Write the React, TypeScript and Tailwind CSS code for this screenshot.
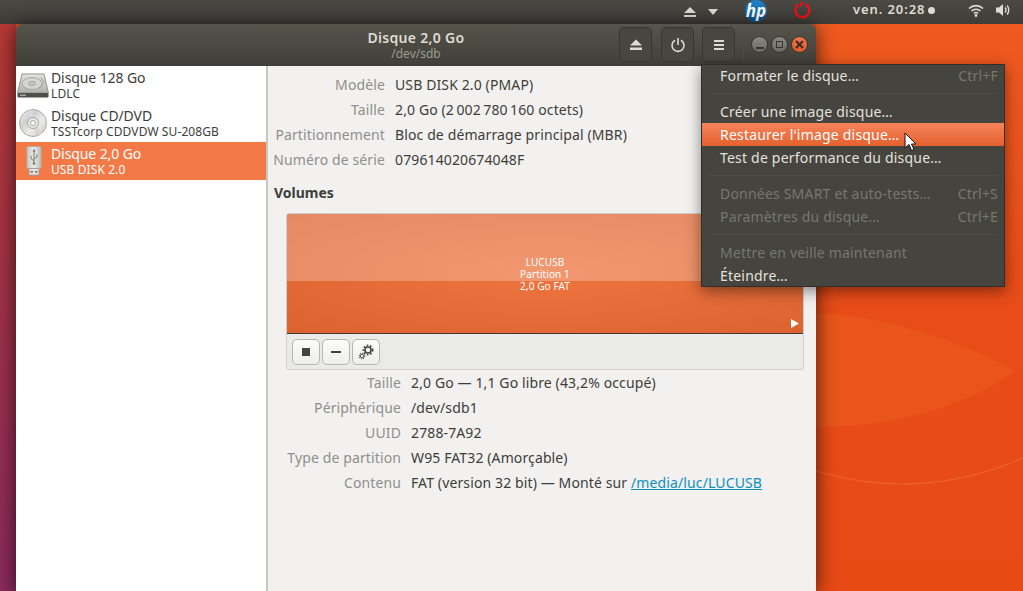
import React from "react";

const font = "font-['Noto_Sans','Open_Sans',sans-serif]";

function HddIcon() {
  return (
    <svg width="32" height="25" viewBox="0 0 32 25" className="shrink-0 -ml-[2px]">
      <defs>
        <linearGradient id="hddTop" x1="0" y1="0" x2="0" y2="1">
          <stop offset="0" stopColor="#e4e4e2" />
          <stop offset="1" stopColor="#b0b0ac" />
        </linearGradient>
      </defs>
      <path d="M5 1h22l4.5 19H.5z" fill="url(#hddTop)" stroke="#92928e" />
      <ellipse cx="15" cy="10.5" rx="10" ry="6" fill="#d4d4d1" stroke="#a8a8a4" />
      <ellipse cx="15" cy="10.5" rx="3.5" ry="2" fill="#c6c6c2" stroke="#a0a09c" />
      <path d="M24 4.5l3 5-5 6" fill="none" stroke="#9a9a96" strokeWidth="1" />
      <rect x="0.5" y="20" width="31" height="4.5" rx="1" fill="#4f4f4c" />
      <rect x="3" y="21.5" width="6" height="1.5" fill="#a2a29e" />
    </svg>
  );
}

function CdIcon() {
  return (
    <svg width="30" height="30" viewBox="0 0 30 30" className="shrink-0 -ml-[1px]">
      <defs>
        <linearGradient id="cdFace" x1="0" y1="0" x2="1" y2="1">
          <stop offset="0" stopColor="#f0f0ee" />
          <stop offset="0.35" stopColor="#cfd0d0" />
          <stop offset="0.6" stopColor="#ececea" />
          <stop offset="1" stopColor="#c8c8c6" />
        </linearGradient>
      </defs>
      <circle cx="15" cy="15" r="13.5" fill="url(#cdFace)" stroke="#aaaaa7" />
      <path d="M15 15L8 4.5A13 13 0 0 1 14 2z" fill="#dcd6de" />
      <path d="M15 15L24 25A13 13 0 0 1 18 27.5z" fill="#d9d6cf" />
      <circle cx="15" cy="15" r="5.5" fill="#e8e8e6" stroke="#a8a8a5" />
      <circle cx="15" cy="15" r="2.5" fill="#ffffff" stroke="#a8a8a5" />
    </svg>
  );
}

function UsbIcon() {
  return (
    <svg width="18" height="30" viewBox="0 0 18 30" className="shrink-0">
      <defs>
        <linearGradient id="usbBody" x1="0" y1="0" x2="1" y2="0">
          <stop offset="0" stopColor="#c9c9c5" />
          <stop offset="0.5" stopColor="#ecebe8" />
          <stop offset="1" stopColor="#bdbcb8" />
        </linearGradient>
      </defs>
      <rect x="2" y="0.5" width="14" height="22" rx="1.5" fill="url(#usbBody)" stroke="#b3b2ae" />
      <rect x="4" y="22.5" width="10" height="6.5" fill="#e6e5e2" stroke="#a19f9b" />
      <rect x="5.5" y="25" width="2.5" height="1.5" fill="#6d6c68" />
      <rect x="10" y="25" width="2.5" height="1.5" fill="#6d6c68" />
      <path d="M9 4v13M9 15l-3-2.5V10M9 13l3-2V8.5" fill="none" stroke="#77766f" strokeWidth="1" />
      <circle cx="9" cy="17.5" r="1.3" fill="#77766f" />
      <path d="M9 3l-1.5 2.5h3z" fill="#77766f" />
    </svg>
  );
}

function Drive({ icon, name, sub, active }: { icon: React.ReactNode; name: string; sub: string; active?: boolean }) {
  return (
    <div className={`h-[38px] flex items-center ${active ? "bg-[#f37a47] text-white" : "text-[#3d3d3a]"}`}>
      <div className="w-[35px] flex justify-center shrink-0">{icon}</div>
      <div className="flex flex-col">
        <span className="text-[14px] leading-[18px] tracking-[-0.1px]">{name}</span>
        <span className="text-[12px] leading-[14px] tracking-[0.1px]">{sub}</span>
      </div>
    </div>
  );
}

function Row({ label, value, w }: { label: string; value: React.ReactNode; w: string }) {
  return (
    <div className="h-[25px] flex items-center text-[14px] tracking-[0.12px]">
      <span className={`${w} text-right text-[#8f8f8b] shrink-0 whitespace-nowrap`}>{label}</span>
      <span className="ml-[10px] text-[#3d3d3a] whitespace-nowrap">{value}</span>
    </div>
  );
}

function HeaderButton({ children }: { children: React.ReactNode }) {
  return (
    <div className="w-[33px] h-[35px] rounded-[5px] border border-[#37362f] bg-[#48473f] flex items-center justify-center">
      {children}
    </div>
  );
}

function ToolButton({ children }: { children: React.ReactNode }) {
  return (
    <div className="w-[28px] h-[26px] rounded-[5px] border border-[#b5b5b1] bg-gradient-to-b from-[#fbfbfa] to-[#efefed] flex items-center justify-center">
      {children}
    </div>
  );
}

function MenuItem({ label, accel, dim, hot }: { label: string; accel?: string; dim?: boolean; hot?: boolean }) {
  return (
    <div
      className={`h-[23px] pl-[18px] pr-[6px] flex items-center justify-between text-[14px] tracking-[0.2px] ${
        hot
          ? "bg-gradient-to-b from-[#f5845a] to-[#e4602c] text-white"
          : dim
          ? "text-[#78776f]"
          : "text-[#e4e2dd]"
      }`}
    >
      <span>{label}</span>
      {accel && <span className="text-[#78776f]">{accel}</span>}
    </div>
  );
}

function MenuSep() {
  return <div className="h-px mx-[6px] my-[6px] bg-[#4f4e47]" />;
}

export default function App() {
  return (
    <div className={`relative w-[1023px] h-[591px] overflow-hidden flex flex-col bg-[#e84a16] ${font}`}>
      {/* wallpaper */}
      <svg className="absolute inset-0" width="1023" height="591" viewBox="0 0 1023 591">
        <defs>
          <linearGradient id="leftWall" x1="0" y1="0" x2="0" y2="1">
            <stop offset="0" stopColor="#b83a32" />
            <stop offset="1" stopColor="#8a2a5e" />
          </linearGradient>
          <linearGradient id="rightWall" x1="0" y1="0" x2="0" y2="1">
            <stop offset="0" stopColor="#ee5a20" />
            <stop offset="0.45" stopColor="#e84c18" />
            <stop offset="1" stopColor="#e84a16" />
          </linearGradient>
        </defs>
        <rect x="0" y="0" width="16" height="591" fill="url(#leftWall)" />
        <rect x="816" y="24" width="207" height="567" fill="url(#rightWall)" />
        <path d="M816 314C880 314 960 340 1015 371C960 410 890 427 816 427z" fill="#ea551b" />
        <path d="M816 471C880 490 950 490 1023 458" fill="none" stroke="#ee6a2a" strokeWidth="1" />
      </svg>

      {/* top bar */}
      <div className="relative h-6 shrink-0 bg-gradient-to-b from-[#4a4943] to-[#3e3d38] flex items-center text-[#dfdbd2]">
        <svg width="14" height="12" viewBox="0 0 14 12" className="ml-[683px]">
          <path d="M7 1l6 6H1zM1 9h12v2H1z" fill="#dfdbd2" />
        </svg>
        <svg width="10" height="6" viewBox="0 0 10 6" className="ml-[11px]">
          <path d="M0 0h10L5 6z" fill="#dfdbd2" />
        </svg>
        <div className="ml-[27px] -mt-[3px] w-[22px] h-[22px] rounded-full bg-gradient-to-b from-[#1d86cf] to-[#0a4f8e] flex items-center justify-center">
          <span className="text-white text-[17px] font-bold italic leading-none">hp</span>
        </div>
        <svg width="18" height="18" viewBox="0 0 18 18" className="ml-[26px] -mt-[5px]">
          <path d="M5.5 3.4A7 7 0 1 0 12.8 3.2M9.5 0.8L7.5 5" fill="none" stroke="#f0101a" strokeWidth="2.4" />
        </svg>
        <span className="ml-[42px] -mt-[4px] text-[13px] font-semibold tracking-[0.9px] whitespace-nowrap">ven. 20:28</span>
        <span className="ml-[3px] -mt-[4px] w-[7px] h-[7px] rounded-full bg-[#dfdbd2]" />
        <svg width="16" height="13" viewBox="0 0 16 13" className="ml-[33px] -mt-[4px]">
          <path d="M1 4.5a10 10 0 0 1 14 0M3.5 7a6.5 6.5 0 0 1 9 0M6 9.4a3 3 0 0 1 4 0" fill="none" stroke="#dfdbd2" strokeWidth="1.6" />
          <circle cx="8" cy="11.5" r="1.4" fill="#dfdbd2" />
        </svg>
        <svg width="16" height="14" viewBox="0 0 16 14" className="ml-[11px] -mt-[4px]">
          <path d="M1 4.5h3L8 1v12L4 9.5H1z" fill="#dfdbd2" />
          <path d="M10 4.5a3.5 3.5 0 0 1 0 5M12 2.5a6.5 6.5 0 0 1 0 9" fill="none" stroke="#dfdbd2" strokeWidth="1.4" />
        </svg>
      </div>

      {/* disks window */}
      <div className="relative ml-4 w-[800px] flex-1 flex flex-col rounded-t-[6px] overflow-hidden shadow-[0_3px_20px_rgba(0,0,0,0.7)]">
        <div className="h-[42px] shrink-0 bg-gradient-to-b from-[#56554c] to-[#3f3e38] flex items-center">
          <div className="w-[800px] relative flex items-center h-full">
            <div className="flex-1 flex flex-col items-center">
              <span className="text-[14px] leading-[16px] font-semibold tracking-[0.3px] text-[#dfdbd2]">Disque 2,0 Go</span>
              <span className="text-[12px] leading-[15px] text-[#9c9b92]">/dev/sdb</span>
            </div>
            <div className="absolute right-[8px] top-[3px] flex items-center">
              <HeaderButton>
                <svg width="14" height="12" viewBox="0 0 14 12"><path d="M7 0.5L13 6.5H1zM1 8.5h12v2.5H1z" fill="#dfdbd2" /></svg>
              </HeaderButton>
              <div className="w-[9px]" />
              <HeaderButton>
                <svg width="16" height="16" viewBox="0 0 16 16"><path d="M5 3.2A6 6 0 1 0 11 3.2M8 1v7" fill="none" stroke="#dfdbd2" strokeWidth="1.6" /></svg>
              </HeaderButton>
              <div className="w-2" />
              <HeaderButton>
                <svg width="12" height="12" viewBox="0 0 12 12"><path d="M1 1h10v2H1zM1 5h10v2H1zM1 9h10v2H1z" fill="#dfdbd2" /></svg>
              </HeaderButton>
              <div className="w-px h-[30px] bg-[#4d4c45] ml-[8px] mr-[7px]" />
              <div className="w-[17px] h-[17px] rounded-full bg-gradient-to-b from-[#8a897f] to-[#6c6b62] border border-[#35342e] flex items-end justify-center pb-[3px]">
                <div className="w-[8px] h-[2px] bg-[#35342e]" />
              </div>
              <div className="ml-[3px] w-[17px] h-[17px] rounded-full bg-gradient-to-b from-[#8a897f] to-[#6c6b62] border border-[#35342e] flex items-center justify-center">
                <div className="w-[7px] h-[7px] border-[1.5px] border-[#35342e]" />
              </div>
              <div className="ml-[3px] w-[17px] h-[17px] rounded-full bg-gradient-to-b from-[#f0744a] to-[#de5a2c] border border-[#35342e] flex items-center justify-center">
                <svg width="9" height="9" viewBox="0 0 9 9"><path d="M1 1l7 7M8 1l-7 7" stroke="#3a2a20" strokeWidth="2" /></svg>
              </div>
            </div>
          </div>
        </div>

        <div className="flex-1 flex min-h-0">
          <div className="w-[252px] shrink-0 bg-white border-r-[2px] border-[#c6c6c3]">
            <Drive icon={<HddIcon />} name="Disque 128 Go" sub="LDLC" />
            <Drive icon={<CdIcon />} name="Disque CD/DVD" sub="TSSTcorp CDDVDW SU-208GB" />
            <Drive icon={<UsbIcon />} name="Disque 2,0 Go" sub="USB DISK 2.0" active />
          </div>
          <div className="flex-1 bg-[#f2f1ef] pt-[6px]">
            <Row w="w-[117px]" label="Modèle" value="USB DISK 2.0 (PMAP)" />
            <Row w="w-[117px]" label="Taille" value={"2,0 Go (2\u202f002\u202f780\u202f160 octets)"} />
            <Row w="w-[117px]" label="Partitionnement" value="Bloc de démarrage principal (MBR)" />
            <Row w="w-[117px]" label="Numéro de série" value="079614020674048F" />
            <div className="mt-[8px] ml-[6px] h-[25px] flex items-center text-[14px] font-bold text-[#3d3d3a]">Volumes</div>
            <div className="mt-[8px] ml-[18px] w-[518px] h-[157px] border border-[#cfcfcc] rounded-[3px] bg-[#eaeae8] overflow-hidden flex flex-col">
              <div className="relative h-[120px] shrink-0 border-b border-[#3f3a35] flex flex-col items-center justify-center bg-[radial-gradient(ellipse_at_center,#ee7540,#dc6230)]">
                <div className="absolute inset-x-0 top-0 h-[67px] bg-white/25" />
                <span className="relative text-[10px] leading-[12px] tracking-[0.1px] text-white">LUCUSB</span>
                <span className="relative text-[10px] leading-[12px] tracking-[0.1px] text-white">Partition 1</span>
                <span className="relative text-[10px] leading-[12px] tracking-[0.1px] text-white">2,0 Go FAT</span>
                <svg width="8" height="9" viewBox="0 0 8 9" className="absolute right-[4px] bottom-[5px]"><path d="M0 0l8 4.5L0 9z" fill="#fff" /></svg>
              </div>
              <div className="flex items-center h-[36px] pl-[5px] gap-[2px]">
                <ToolButton><div className="w-2 h-2 bg-[#444]" /></ToolButton>
                <ToolButton><div className="w-[10px] h-[2px] bg-[#444]" /></ToolButton>
                <ToolButton>
                  <svg width="18" height="18" viewBox="0 0 18 18">
                    <circle cx="11" cy="7" r="3" fill="none" stroke="#444" strokeWidth="1.6" />
                    <circle cx="11" cy="7" r="4.6" fill="none" stroke="#444" strokeWidth="1.8" strokeDasharray="1.6 1.7" />
                    <circle cx="5" cy="13" r="1.7" fill="none" stroke="#555" strokeWidth="1" />
                    <circle cx="5" cy="13" r="2.8" fill="none" stroke="#555" strokeWidth="1.2" strokeDasharray="1.1 1.1" />
                  </svg>
                </ToolButton>
              </div>
            </div>
            <div>
              <Row w="w-[133px]" label="Taille" value="2,0 Go — 1,1 Go libre (43,2% occupé)" />
              <Row w="w-[133px]" label="Périphérique" value="/dev/sdb1" />
              <Row w="w-[133px]" label="UUID" value="2788-7A92" />
              <Row w="w-[133px]" label="Type de partition" value="W95 FAT32 (Amorçable)" />
              <Row
                w="w-[133px]"
                label="Contenu"
                value={
                  <>
                    FAT (version 32 bit) — Monté sur <span className="text-[#0f8fc0] underline">/media/luc/LUCUSB</span>
                  </>
                }
              />
            </div>
          </div>
        </div>
      </div>

      {/* popover menu */}
      <div className="absolute left-[701px] top-[64px] w-[304px] h-[223px] bg-[#45443e] border border-[#2f2e29] shadow-[0_4px_14px_rgba(0,0,0,0.45)]">
        <div className="-mt-px">
          <MenuItem label="Formater le disque…" accel="Ctrl+F" />
          <MenuSep />
          <MenuItem label="Créer une image disque…" />
          <MenuItem label="Restaurer l'image disque…" hot />
          <MenuItem label="Test de performance du disque…" />
          <MenuSep />
          <MenuItem label="Données SMART et auto-tests…" accel="Ctrl+S" dim />
          <MenuItem label="Paramètres du disque…" accel="Ctrl+E" dim />
          <MenuSep />
          <MenuItem label="Mettre en veille maintenant" dim />
          <MenuItem label="Éteindre…" />
        </div>
      </div>

      {/* mouse pointer */}
      <svg width="14" height="20" viewBox="0 0 14 20" className="absolute left-[904px] top-[132px]">
        <path d="M1 1v15l4-3.5 2.5 6 2.5-1-2.5-5.5H12z" fill="#fff" stroke="#111" strokeWidth="1" />
      </svg>
    </div>
  );
}
